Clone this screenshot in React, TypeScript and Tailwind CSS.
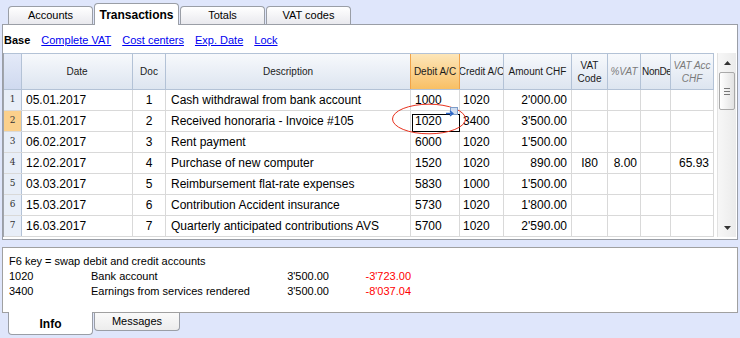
import React from "react";

const colW = [
  "w-[18px]",
  "w-[111px]",
  "w-[33px]",
  "w-[245px]",
  "w-[49px]",
  "w-[44px]",
  "w-[68px]",
  "w-[36px]",
  "w-[33px]",
  "w-[30px]",
  "w-[43px]",
];

type Row = {
  n: string;
  date: string;
  doc: string;
  desc: string;
  debit: string;
  credit: string;
  amount: string;
  vat?: string;
  pct?: string;
  acc?: string;
};

const rows: Row[] = [
  { n: "1", date: "05.01.2017", doc: "1", desc: "Cash withdrawal from bank account", debit: "1000", credit: "1020", amount: "2'000.00" },
  { n: "2", date: "15.01.2017", doc: "2", desc: "Received honoraria - Invoice #105", debit: "1020", credit: "3400", amount: "3'500.00" },
  { n: "3", date: "06.02.2017", doc: "3", desc: "Rent payment", debit: "6000", credit: "1020", amount: "1'500.00" },
  { n: "4", date: "12.02.2017", doc: "4", desc: "Purchase of new computer", debit: "1520", credit: "1020", amount: "890.00", vat: "I80", pct: "8.00", acc: "65.93" },
  { n: "5", date: "03.03.2017", doc: "5", desc: "Reimbursement flat-rate expenses", debit: "5830", credit: "1000", amount: "1'500.00" },
  { n: "6", date: "15.03.2017", doc: "6", desc: "Contribution Accident insurance", debit: "5730", credit: "1020", amount: "1'800.00" },
  { n: "7", date: "16.03.2017", doc: "7", desc: "Quarterly anticipated contributions AVS", debit: "5700", credit: "1020", amount: "2'590.00" },
];

function TopTab({ label, active }: { label: string; active?: boolean }) {
  if (active) {
    return (
      <div className="relative z-10 w-[85px] h-[22px] bg-white border border-b-0 border-[#9a9ea6] rounded-t-[4px] flex items-start justify-center pt-[2px] text-[12px] font-bold text-black">
        {label}
      </div>
    );
  }
  return (
    <div className="w-[85px] h-[18px] mb-px bg-gradient-to-b from-white to-[#e9e9ee] border border-b-0 border-[#9a9ea6] rounded-t-[4px] flex items-center justify-center text-[11px] text-black">
      {label}
    </div>
  );
}

function HeaderCell({
  w,
  children,
  italic,
  debit,
  left,
}: {
  w: string;
  children?: React.ReactNode;
  italic?: boolean;
  debit?: boolean;
  left?: boolean;
}) {
  const base = "shrink-0 h-full flex items-center leading-[13px] text-[10px] overflow-hidden whitespace-nowrap";
  const align = left ? " justify-start pl-[1px]" : " justify-center text-center";
  const color = italic ? " italic text-[#7a7a7a]" : " text-[#1a1a1a]";
  const bg = debit
    ? " bg-gradient-to-b from-[#fde6b8] to-[#f8bf63] border-x border-[#f0a34a] -ml-px"
    : " border-r border-[#b3c2d6]";
  return <div className={w + " " + base + align + color + bg}>{children}</div>;
}

export default function App() {
  return (
    <div
      className="w-[740px] h-[338px] bg-[#dfe6fb] overflow-hidden text-black"
      style={{ fontFamily: '"Liberation Sans", Arial, sans-serif' }}
    >
      {/* Top tabs */}
      <div className="h-[25px] flex items-end pl-[8px] gap-[1px]">
        <TopTab label="Accounts" />
        <TopTab label="Transactions" active />
        <TopTab label="Totals" />
        <TopTab label="VAT codes" />
      </div>

      {/* Main panel */}
      <div className="-mt-px ml-[2px] w-[736px] h-[216px] bg-white border border-[#9a9ea6] flex flex-col">
        {/* Links row */}
        <div className="h-[28px] shrink-0 flex items-center gap-[11px] pl-[1px] pt-[3px] text-[11px]">
          <span className="font-bold">Base</span>
          <span className="text-[#0000f0] underline">Complete VAT</span>
          <span className="text-[#0000f0] underline">Cost centers</span>
          <span className="text-[#0000f0] underline">Exp. Date</span>
          <span className="text-[#0000f0] underline">Lock</span>
        </div>

        <div className="flex h-[184px]">
          {/* Table */}
          <div className="relative w-[711px] border-l border-[#a0a4ac] flex flex-col">
            {/* Header */}
            <div className="h-[37px] flex border-t border-b border-[#b3c2d6] bg-gradient-to-b from-[#f7f9fc] to-[#dde5f0]">
              <div className="w-[18px] shrink-0 h-full bg-gradient-to-b from-[#e4eaf8] to-[#cfd9ef] border-r border-[#b3c2d6]" />
              <HeaderCell w={colW[1]}>Date</HeaderCell>
              <HeaderCell w={colW[2]}>Doc</HeaderCell>
              <HeaderCell w={colW[3]}>Description</HeaderCell>
              <HeaderCell w="w-[50px]" debit>
                Debit A/C
              </HeaderCell>
              <HeaderCell w={colW[5]}>Credit A/C</HeaderCell>
              <HeaderCell w={colW[6]}>Amount CHF</HeaderCell>
              <HeaderCell w={colW[7]}>
                <span>
                  VAT
                  <br />
                  Code
                </span>
              </HeaderCell>
              <HeaderCell w={colW[8]} italic>
                %VAT
              </HeaderCell>
              <HeaderCell w={colW[9]} left>
                <span className="tracking-[-0.3px]">NonDe</span>
              </HeaderCell>
              <HeaderCell w={colW[10]} italic>
                <span>
                  VAT Acc
                  <br />
                  CHF
                </span>
              </HeaderCell>
            </div>

            {/* Body */}
            {rows.map((r) => {
              const sel = r.n === "2";
              return (
                <div key={r.n} className="h-[21px] flex border-b border-[#d9d9d9] text-[12px]">
                  <div
                    className={
                      "w-[18px] shrink-0 flex items-center justify-center text-[9px] text-[#333] border-r border-[#b3c2d6] " +
                      (sel ? "bg-[#fbd08c]" : "bg-[#e8eef8]")
                    }
                    style={{ fontFamily: '"DejaVu Serif", serif' }}
                  >
                    {r.n}
                  </div>
                  <div className="w-[111px] shrink-0 flex items-center pl-[4px] border-r border-[#d9d9d9]">{r.date}</div>
                  <div className="w-[33px] shrink-0 flex items-center justify-center border-r border-[#d9d9d9]">{r.doc}</div>
                  <div className="w-[245px] shrink-0 flex items-center pl-[5px] border-r border-[#d9d9d9] overflow-hidden whitespace-nowrap">
                    {r.desc}
                  </div>
                  <div className="relative w-[49px] shrink-0 flex items-center pl-[4px] border-r border-[#d9d9d9]">
                    {r.debit}
                    {sel && <div className="absolute left-[1px] -right-px top-[3px] -bottom-px border border-black" />}
                  </div>
                  <div className="w-[44px] shrink-0 flex items-center pl-[3px] border-r border-[#d9d9d9]">{r.credit}</div>
                  <div className="w-[68px] shrink-0 flex items-center justify-end pr-[4px] border-r border-[#d9d9d9]">{r.amount}</div>
                  <div className="w-[36px] shrink-0 flex items-center justify-center border-r border-[#d9d9d9]">{r.vat ?? ""}</div>
                  <div className="w-[33px] shrink-0 flex items-center justify-end pr-[3px] border-r border-[#d9d9d9]">{r.pct ?? ""}</div>
                  <div className="w-[30px] shrink-0 border-r border-[#d9d9d9]" />
                  <div className="w-[43px] shrink-0 flex items-center justify-end pr-[4px] border-r border-[#d9d9d9]">{r.acc ?? ""}</div>
                </div>
              );
            })}

            {/* Red ellipse annotation */}
            <svg className="absolute left-[387px] top-[50px] pointer-events-none" width="76" height="32" viewBox="0 0 76 32">
              <ellipse cx="38" cy="16" rx="36.5" ry="14.8" fill="none" stroke="#e8321e" strokeWidth="1" />
            </svg>
            {/* small swap icon */}
            <svg className="absolute left-[442px] top-[54px]" width="12" height="10" viewBox="0 0 12 10">
              <rect x="4.5" y="0.5" width="7" height="7" fill="#cfdcf0" stroke="#7d9cc8" strokeWidth="1" />
              <path d="M0 6.5 H6" stroke="#2a64c8" strokeWidth="1.5" />
              <path d="M4 4 L7 6.5 L4 9" fill="none" stroke="#2a64c8" strokeWidth="1.2" />
            </svg>
          </div>

          <div className="w-[3px]" />

          {/* Scrollbar */}
          <div className="w-[19px] flex flex-col bg-gradient-to-r from-[#f7f7f7] to-[#ebebeb] border-l border-[#e2e2e2]">
            <div className="h-[19px] flex items-center justify-center">
              <svg width="7" height="4" viewBox="0 0 7 4">
                <path d="M0 4 L3.5 0 L7 4 Z" fill="#333" />
              </svg>
            </div>
            <div className="h-[38px] mx-px rounded-[2px] border border-[#a9a9a9] bg-gradient-to-r from-white to-[#e2e2e2] flex flex-col items-center justify-center gap-[2px]">
              <div className="w-[6px] h-px bg-[#777]" />
              <div className="w-[6px] h-px bg-[#777]" />
              <div className="w-[6px] h-px bg-[#777]" />
            </div>
            <div className="flex-1" />
            <div className="h-[19px] flex items-center justify-center">
              <svg width="7" height="4" viewBox="0 0 7 4">
                <path d="M0 0 L3.5 4 L7 0 Z" fill="#333" />
              </svg>
            </div>
          </div>
        </div>
      </div>

      {/* Info panel */}
      <div className="mt-[7px] ml-[2px] w-[736px] h-[66px] bg-white border border-[#a0a0a0] pl-[6px] pt-[6px] text-[11px] leading-[15px]">
        <div>F6 key = swap debit and credit accounts</div>
        <div className="flex">
          <div className="w-[82px]">1020</div>
          <div className="w-[178px]">Bank account</div>
          <div className="w-[60px] text-right">3'500.00</div>
          <div className="w-[82px] text-right text-[#ff0000]">-3'723.00</div>
        </div>
        <div className="flex">
          <div className="w-[82px]">3400</div>
          <div className="w-[178px]">Earnings from services rendered</div>
          <div className="w-[60px] text-right">3'500.00</div>
          <div className="w-[82px] text-right text-[#ff0000]">-8'037.04</div>
        </div>
      </div>

      {/* Bottom tabs */}
      <div className="-mt-px flex items-start pl-[8px] gap-[1px]">
        <div className="relative z-10 w-[85px] h-[23px] bg-white border border-t-0 border-[#9a9ea6] rounded-b-[4px] flex items-center justify-center pt-[2px] text-[12px] font-bold">
          Info
        </div>
        <div className="w-[86px] h-[18px] mt-px bg-gradient-to-b from-[#fafafa] to-[#ececec] border border-t-0 border-[#9a9ea6] rounded-b-[4px] flex items-center justify-center text-[11px]">
          Messages
        </div>
      </div>
    </div>
  );
}
